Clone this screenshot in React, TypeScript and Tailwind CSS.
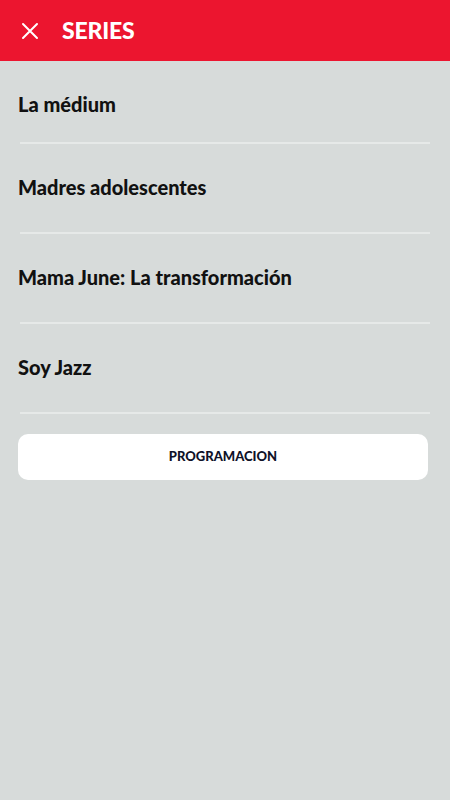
import React from "react";

const series = [
  "La médium",
  "Madres adolescentes",
  "Mama June: La transformación",
  "Soy Jazz",
];

export default function App() {
  return (
    <div
      className="min-h-[800px] w-full bg-[#d7dbda]"
      style={{ fontFamily: "Lato, 'Open Sans', sans-serif" }}
    >
      {/* top bar */}
      <header className="flex h-[61px] items-center bg-[#ec152f] pl-[21px]">
        <svg width="18" height="18" viewBox="0 0 18 18" className="shrink-0">
          <path d="M2 2L16 16M16 2L2 16" stroke="white" strokeWidth="2" strokeLinecap="round" />
        </svg>
        <h1 className="ml-[23px] text-[23px] font-black tracking-[-0.2px] text-white">SERIES</h1>
      </header>

      <ul className="pl-[18px] pr-[20px]">
        {series.map((title, i) => (
          <li
            key={title}
            className={`ml-[2px] flex items-center border-b-2 border-[#e6e9e8] ${i === 0 ? "h-[83px] pt-[4px]" : "h-[90px] pb-[2px]"}`}
          >
            <span className="-ml-[2px] text-[20px] font-black leading-none text-[#111]">{title}</span>
          </li>
        ))}
      </ul>

      <div className="pl-[18px] pr-[22px] pt-[20px]">
        <button className="flex h-[46px] w-full items-center justify-center rounded-[10px] bg-white text-[13px] font-black text-[#0f1229]">
          PROGRAMACION
        </button>
      </div>
    </div>
  );
}
